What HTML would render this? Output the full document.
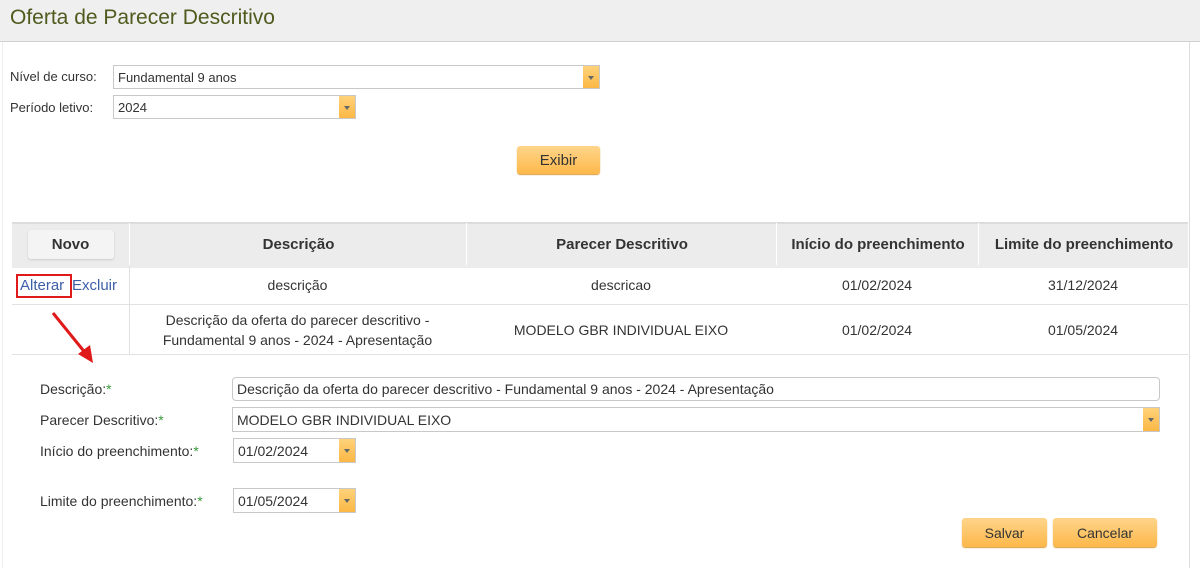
<!DOCTYPE html><html><head><meta charset="utf-8"><style>
body{margin:0;width:1200px;height:568px;background:#fff;font-family:"Liberation Sans",sans-serif;color:#333;position:relative;overflow:hidden}
.a{position:absolute}
.t{font-size:14px;white-space:nowrap}
.inp{position:absolute;border:1px solid #c8c8c8;background:#fff;box-sizing:border-box;font-size:14px;padding-left:4px;display:flex;align-items:center}
.dd{position:absolute;right:0;top:0;bottom:0;width:16px;background:linear-gradient(#ffd27a,#fbb845)}
.dd:after{content:"";position:absolute;left:5px;top:45%;border:3px solid transparent;border-top:4px solid #666}
.btn{position:absolute;background:linear-gradient(#ffd58a,#fdb84a);border-radius:3px;font-size:15px;color:#333;display:flex;align-items:center;justify-content:center;box-shadow:0 1px 1px #d9a040}
.th{position:absolute;top:223px;height:42px;display:flex;align-items:center;justify-content:center;font-weight:bold;font-size:15px;color:#333;border-left:1px solid #fff}
.td{position:absolute;display:flex;align-items:center;justify-content:center;text-align:center;font-size:14px;line-height:20px}
.hl{position:absolute;left:12px;width:1176px;height:1px;background:#e2e2e2}
.g{color:#3a9a3a}
</style></head><body>
<div class="a" style="left:0;top:0;width:1200px;height:41px;background:#efefef;border-bottom:1px solid #d0d0d0"></div>
<div class="a" style="left:10px;top:6px;font-size:21px;color:#4f5b1e">Oferta de Parecer Descritivo</div>
<div class="a" style="left:1189px;top:42px;width:1px;height:526px;background:#ddd"></div>
<div class="a" style="left:2px;top:42px;width:1px;height:526px;background:#eee"></div>
<div class="a t" style="left:10px;top:69px;font-size:13px">Nível de curso:</div>
<div class="inp" style="left:113px;top:65px;width:487px;height:24px;font-size:13px">Fundamental 9 anos<div class="dd"></div></div>
<div class="a t" style="left:10px;top:100px;font-size:13px">Período letivo:</div>
<div class="inp" style="left:113px;top:95px;width:243px;height:24px;font-size:13px">2024<div class="dd"></div></div>
<div class="btn" style="left:517px;top:146px;width:83px;height:28px">Exibir</div>
<div class="a" style="left:12px;top:222px;width:1176px;height:44px;background:#ececec;border-top:2px solid #dcdcdc"></div>
<div class="th" style="left:12px;width:117px;border-left:0"><div style="width:86px;height:29px;background:#f4f4f4;border-radius:3px;box-shadow:0 1px 2px #ccc;display:flex;align-items:center;justify-content:center">Novo</div></div>
<div class="th" style="left:129px;width:337px">Descrição</div>
<div class="th" style="left:466px;width:310px">Parecer Descritivo</div>
<div class="th" style="left:776px;width:202px">Início do preenchimento</div>
<div class="th" style="left:978px;width:210px">Limite do preenchimento</div>
<div class="a" style="left:129px;top:266px;width:1px;height:88px;background:#e0e0e0"></div>
<div class="hl" style="top:304px"></div><div class="hl" style="top:354px"></div>
<div class="a t" style="left:20px;top:277px;color:#3d5ea8;font-size:15px">Alterar</div>
<div class="a t" style="left:72px;top:277px;color:#3d5ea8;font-size:15px">Excluir</div>
<div class="a" style="left:16px;top:274px;width:52px;height:20px;border:2px solid #e01a1a"></div>
<div class="td" style="left:129px;top:266px;width:337px;height:38px">descrição</div>
<div class="td" style="left:466px;top:266px;width:310px;height:38px">descricao</div>
<div class="td" style="left:776px;top:266px;width:202px;height:38px">01/02/2024</div>
<div class="td" style="left:978px;top:266px;width:210px;height:38px">31/12/2024</div>
<div class="td" style="left:129px;top:305px;width:337px;height:49px">Descrição da oferta do parecer descritivo -<br>Fundamental 9 anos - 2024 - Apresentação</div>
<div class="td" style="left:466px;top:305px;width:310px;height:49px">MODELO GBR INDIVIDUAL EIXO</div>
<div class="td" style="left:776px;top:305px;width:202px;height:49px">01/02/2024</div>
<div class="td" style="left:978px;top:305px;width:210px;height:49px">01/05/2024</div>
<svg class="a" style="left:45px;top:305px" width="60" height="65"><line x1="8" y1="8" x2="42" y2="50" stroke="#e01a1a" stroke-width="3"/><polygon points="48,58 33,49 45,40" fill="#e01a1a"/></svg>
<div class="a t" style="left:40px;top:381px">Descrição:<span class="g">*</span></div>
<div class="inp" style="left:232px;top:377px;width:928px;height:24px;border-radius:4px">Descrição da oferta do parecer descritivo - Fundamental 9 anos - 2024 - Apresentação</div>
<div class="a t" style="left:40px;top:412px">Parecer Descritivo:<span class="g">*</span></div>
<div class="inp" style="left:232px;top:407px;width:928px;height:25px">MODELO GBR INDIVIDUAL EIXO<div class="dd"></div></div>
<div class="a t" style="left:40px;top:443px">Início do preenchimento:<span class="g">*</span></div>
<div class="inp" style="left:233px;top:438px;width:123px;height:25px">01/02/2024<div class="dd"></div></div>
<div class="a t" style="left:40px;top:493px">Limite do preenchimento:<span class="g">*</span></div>
<div class="inp" style="left:233px;top:488px;width:123px;height:25px">01/05/2024<div class="dd"></div></div>
<div class="btn" style="left:962px;top:518px;width:85px;height:29px;font-size:14px">Salvar</div>
<div class="btn" style="left:1053px;top:518px;width:104px;height:29px;font-size:14px">Cancelar</div>
</body></html>
